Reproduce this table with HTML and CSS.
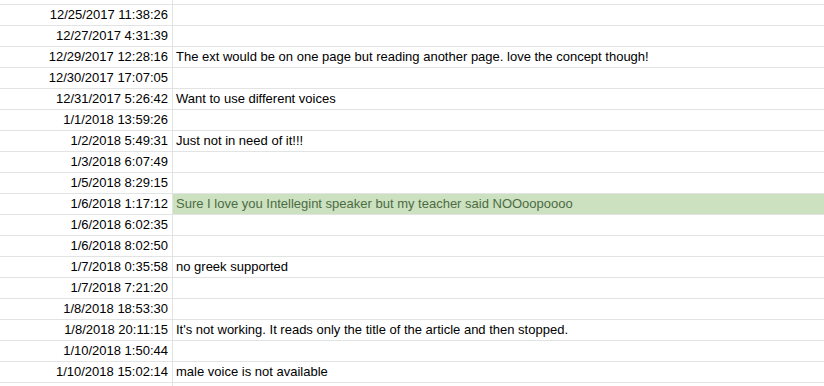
FILE: index.html
```html
<!DOCTYPE html>
<html>
<head>
<meta charset="utf-8">
<link rel="stylesheet" href="styles.css">
</head>
<body>
<div class="sheet">
  <div class="row top"><div class="a"></div><div class="b"></div></div>
  <div class="row"><div class="a">12/25/2017 11:38:26</div><div class="b"></div></div>
  <div class="row"><div class="a">12/27/2017 4:31:39</div><div class="b"></div></div>
  <div class="row"><div class="a">12/29/2017 12:28:16</div><div class="b">The ext would be on one page but reading another page. love the concept though!</div></div>
  <div class="row"><div class="a">12/30/2017 17:07:05</div><div class="b"></div></div>
  <div class="row"><div class="a">12/31/2017 5:26:42</div><div class="b">Want to use different voices</div></div>
  <div class="row"><div class="a">1/1/2018 13:59:26</div><div class="b"></div></div>
  <div class="row"><div class="a">1/2/2018 5:49:31</div><div class="b">Just not in need of it!!!</div></div>
  <div class="row"><div class="a">1/3/2018 6:07:49</div><div class="b"></div></div>
  <div class="row"><div class="a">1/5/2018 8:29:15</div><div class="b"></div></div>
  <div class="row hl"><div class="a">1/6/2018 1:17:12</div><div class="b">Sure I love you Intellegint speaker but my teacher said NOOoopoooo</div></div>
  <div class="row"><div class="a">1/6/2018 6:02:35</div><div class="b"></div></div>
  <div class="row"><div class="a">1/6/2018 8:02:50</div><div class="b"></div></div>
  <div class="row"><div class="a">1/7/2018 0:35:58</div><div class="b">no greek supported</div></div>
  <div class="row"><div class="a">1/7/2018 7:21:20</div><div class="b"></div></div>
  <div class="row"><div class="a">1/8/2018 18:53:30</div><div class="b"></div></div>
  <div class="row"><div class="a">1/8/2018 20:11:15</div><div class="b">It's not working. It reads only the title of the article and then stopped.</div></div>
  <div class="row"><div class="a">1/10/2018 1:50:44</div><div class="b"></div></div>
  <div class="row"><div class="a">1/10/2018 15:02:14</div><div class="b">male voice is not available</div></div>
  <div class="row"><div class="a"></div><div class="b"></div></div>
</div>
</body>
</html>
```

FILE: styles.css
```css
html, body {
  margin: 0;
  padding: 0;
  background: #ffffff;
}
body {
  font-family: "Liberation Sans", Arial, sans-serif;
  font-size: 13px;
  color: #000000;
  overflow: hidden;
}
.sheet {
  display: flex;
  flex-direction: column;
  width: 824px;
}
.row {
  display: grid;
  grid-template-columns: 173px 1fr;
  height: 21px;
  line-height: 20px;
}
.row.top {
  height: 5px;
}
.a {
  border-right: 1px solid #e2e3e3;
  border-bottom: 1px solid #e2e3e3;
  text-align: right;
  padding-right: 4px;
  white-space: nowrap;
  overflow: hidden;
}
.b {
  border-bottom: 1px solid #e2e3e3;
  padding-left: 3px;
  white-space: nowrap;
  overflow: hidden;
}
.row.hl .b {
  background: #cbe1bf;
  color: #4d6b45;
}
```
